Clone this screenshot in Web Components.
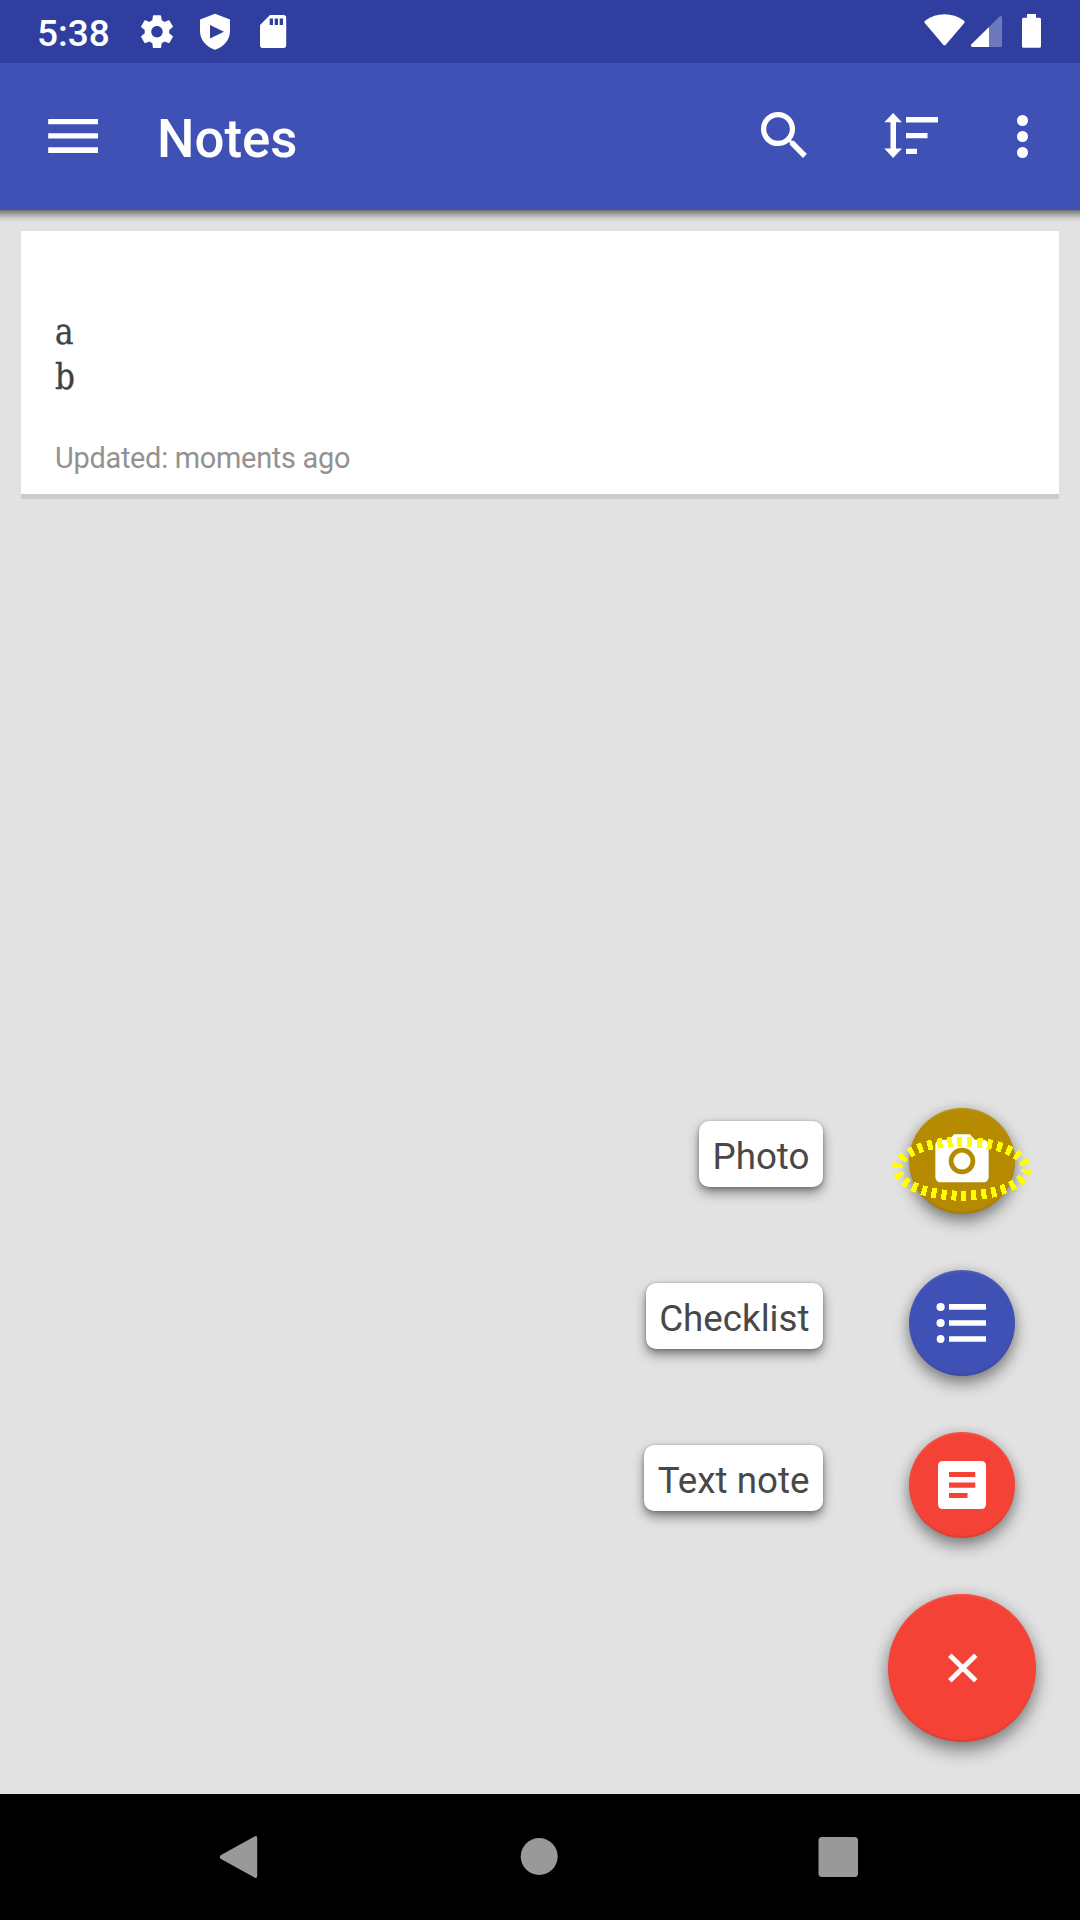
<!DOCTYPE html>
<html lang="en">
<head>
<meta charset="utf-8">
<title>Notes</title>
<style>
html,body{margin:0;padding:0}
body{width:1080px;height:1920px;overflow:hidden;font-family:Roboto,"Noto Sans",sans-serif}
</style>
</head>
<body>
<notes-app></notes-app>
<script>
const define = (name, html) => customElements.define(name, class extends HTMLElement {
  constructor() {
    super();
    const t = document.createElement('template');
    t.innerHTML = html;
    this.attachShadow({mode: 'open'}).append(t.content.cloneNode(true));
  }
});

define('status-bar', `
<style>
:host{display:flex;box-sizing:border-box;height:63px;padding:0 39px 0 37px;background:#303f9f;color:#fff;justify-content:space-between}
div{display:flex}
time{font-size:37px;font-weight:500;line-height:67px;height:63px;width:83px;margin-right:18px;white-space:nowrap}
svg{fill:#fff;height:63px;flex:none}
</style>
<div>
  <time>5:38</time>
  <svg width="58" viewBox="138 0 58 63"><path transform="translate(137.3 12) scale(1.64)" d="M19.43 12.98c.04-.32.07-.64.07-.98s-.03-.66-.07-.98l2.11-1.65c.19-.15.24-.42.12-.64l-2-3.46c-.12-.22-.39-.3-.61-.22l-2.49 1c-.52-.4-1.08-.73-1.69-.98l-.38-2.65C14.46 2.18 14.25 2 14 2h-4c-.25 0-.46.18-.49.42l-.38 2.65c-.61.25-1.17.59-1.69.98l-2.49-1c-.23-.09-.49 0-.61.22l-2 3.46c-.13.22-.07.49.12.64l2.11 1.65c-.04.32-.07.65-.07.98s.03.66.07.98l-2.11 1.65c-.19.15-.24.42-.12.64l2 3.46c.12.22.39.3.61.22l2.49-1c.52.4 1.08.73 1.69.98l.38 2.65c.03.24.24.42.49.42h4c.25 0 .46-.18.49-.42l.38-2.65c.61-.25 1.17-.59 1.69-.98l2.49 1c.23.09.49 0 .61-.22l2-3.46c.12-.22.07-.49-.12-.64l-2.11-1.65zM12 15.5c-1.93 0-3.5-1.57-3.5-3.5s1.57-3.5 3.5-3.5 3.500 1.570 3.500 3.500-1.570 3.500-3.500 3.500z"/></svg>
  <svg width="58" viewBox="196 0 58 63"><path fill-rule="evenodd" d="M215 13.700L230 19.500V31C230 40 223.500 47 215 49.700C206.500 47 200 40 200 31V19.500ZM210 25V38.600L224 31.700Z"/></svg>
  <svg width="36" viewBox="254 0 36 63"><path fill-rule="evenodd" d="M270 15H283.500Q286.200 15 286.200 17.700V45.300Q286.200 48 283.500 48H262.500Q260 48 260 45.300V25ZM269.700 18.500V25H273V18.500ZM274.700 18.500V25H278V18.500ZM279.700 18.500V25H283V18.500Z"/></svg>
</div>
<div>
  <svg width="46" viewBox="924 0 46 63"><path d="M924.800 23Q923.800 21.500 925.300 20.500Q934 14.200 944.500 14.200T963.800 20.500Q965.200 21.500 964.300 23L946 44.500Q944.500 46.200 943 44.500Z"/></svg>
  <svg width="52" viewBox="970 0 52 63"><path opacity=".3" d="M989 27L999.500 16.500Q1002 15 1002 17.500V45.500Q1002 47 1000.500 47H989Z"/><path d="M989 27V47H972Q970.300 46.500 971.200 44.500Z"/></svg>
  <svg width="19" viewBox="1022 0 19 63"><path d="M1027 14H1036V17.700H1039.500Q1041 17.700 1041 19.200V46.300Q1041 47.800 1039.500 47.800H1023.500Q1022 47.800 1022 46.300V19.200Q1022 17.700 1023.500 17.700H1027Z"/></svg>
</div>`);

define('app-toolbar', `
<style>
:host{display:flex;position:relative;box-sizing:border-box;height:147px;background:#3f51b5;color:#fff}
:host::after{content:"";position:absolute;left:0;right:0;top:147px;height:12px;background:linear-gradient(#727272 0,#a4a4a4 35%,#cfcfcf 70%,#e2e2e2 100%)}
h1{margin:0 auto 0 59px;font-size:52.8px;font-weight:500;line-height:152px;height:147px}
svg{fill:#fff;height:147px;flex:none}
.menu{margin-left:48px}
</style>
<svg class="menu" width="50" viewBox="48 63 50 147"><path d="M48.200 119H98v5.300H48.200zM48.200 133.200H98v5.200H48.200zM48.200 147.200H98v5.700H48.200z"/></svg>
<h1><slot></slot></h1>
<svg width="63" viewBox="753 63 63 147"><path transform="translate(753.100 104.100) scale(2.625)" d="M15.500 14h-.79l-.28-.27C15.410 12.590 16 11.110 16 9.500 16 5.910 13.090 3 9.500 3S3 5.910 3 9.500 5.910 16 9.500 16c1.610 0 3.090-.59 4.230-1.570l.27.28v.79l5 4.990L20.490 19l-4.990-5zm-6 0C7.010 14 5 11.990 5 9.500S7.010 5 9.500 5 14 7.010 14 9.500 11.990 14 9.500 14z"/></svg>
<svg width="200" viewBox="816 63 200 147"><path d="M893.100 113L902 122.300H896V148.500H902L893.100 158L884.300 148.500H890.500V122.300H884.300ZM906 117h32v5.500h-32zM906 133h21.500v5.300H906zM906 148.800h11v5.300h-11z"/></svg>
<svg width="64" viewBox="1016 63 64 147"><circle cx="1022.500" cy="120.500" r="5.500"/><circle cx="1022.500" cy="136.500" r="5.500"/><circle cx="1022.500" cy="152.500" r="5.500"/></svg>`);

define('note-card', `
<style>
:host{display:flex;flex-direction:column;box-sizing:border-box;height:268px;padding:79px 34px 0;background:#fff;border-bottom:5px solid #cbcbcb}
p{margin:0;color:#424242;font:34.500px/45px "Roboto Slab","DejaVu Serif Condensed","DejaVu Serif",serif;font-stretch:condensed;-webkit-text-stroke:.4px #424242}
small{margin-top:41px;font-size:28.900px;line-height:34px;letter-spacing:-.27px;color:#929292}
</style>
<p><slot></slot></p>
<small><slot name="updated"></slot></small>`);

define('action-row', `
<style>
:host{display:flex;position:relative;align-items:center;justify-content:flex-end;height:162px}
.label{box-sizing:border-box;height:66px;padding:0 13px 0 13.500px;margin:-14px 86px 0 0;border-radius:10px;background:#fff;color:#484848;font-size:36.750px;line-height:71px;box-shadow:0 0 2px #0003,0 6px 12px #0006,0 2px 5px #0003;white-space:nowrap}
.fab{box-sizing:border-box;width:106.500px;height:106.500px;padding-bottom:1px;border-radius:50%;background:var(--fab);display:flex;align-items:center;justify-content:center;box-shadow:inset 0 3px 2px -1px #ffffff14,inset 0 -3px 2px -1px #00000018,0 8px 16px #0006,0 1px 12px #0002}
</style>
<span class="label"><slot></slot></span>
<span class="fab"><slot name="icon"></slot></span>
<slot name="marker"></slot>`);

define('close-fab', `
<style>
:host{display:flex;align-items:center;justify-content:center;width:148.500px;height:148.500px;border-radius:50%;background:#f44336;box-shadow:inset 0 3px 2px -1px #ffffff10,inset 0 -3px 2px -1px #00000018,0 9px 18px #0006,0 1px 14px #0002}
</style>
<svg width="40" height="40" viewBox="0 0 40 40"><path d="M7.800 7.200L33.800 32.800M33.800 7.200L7.800 32.800" stroke="#fafafa" stroke-width="5"/></svg>`);

define('nav-bar', `
<style>
:host{display:flex;box-sizing:border-box;height:126px;padding:0 222.500px 0 219px;background:#000;align-items:center;justify-content:space-between}
svg{fill:#999;flex:none;overflow:visible}
</style>
<svg width="40" height="42" viewBox="219 1836 40 42"><path d="M254.500 1836.500Q257.200 1835 257.200 1838V1876Q257.200 1879 254.500 1877.500L221 1859Q218.500 1857 221 1855Z"/></svg>
<svg width="38" height="42" viewBox="519.200 1836 38 42"><circle cx="539.400" cy="1856.500" r="18.500"/></svg>
<svg width="40" height="42" viewBox="817.500 1836 40 42"><rect x="818" y="1837" width="39.500" height="40" rx="3.500"/></svg>`);

define('notes-app', `
<style>
:host{display:flex;flex-direction:column;position:relative;width:1080px;height:1920px;background:#e2e2e2}
main{flex:1;padding:21px}
.dial{position:absolute;right:44px;bottom:177.800px;display:flex;flex-direction:column;align-items:flex-end}
action-row{margin-right:21px}
close-fab{margin-top:27.500px}
svg{display:block}
.focus{position:absolute;right:-20px;top:53.500px}
</style>
<status-bar></status-bar>
<app-toolbar>Notes</app-toolbar>
<main><note-card>a<br>b<span slot="updated">Updated: moments ago</span></note-card></main>
<nav-bar></nav-bar>
<div class="dial">
  <action-row style="--fab:#b58900">Photo
    <svg slot="icon" width="64" height="64" viewBox="0 0 24 24" fill="#fff"><circle cx="12" cy="12" r="3.200"/><path d="M9 2L7.170 4H4c-1.100 0-2 .9-2 2v12c0 1.100.9 2 2 2h16c1.100 0 2-.9 2-2V6c0-1.100-.9-2-2-2h-3.170L15 2H9zm3 15c-2.760 0-5-2.240-5-5s2.240-5 5-5 5 2.240 5 5-2.240 5-5 5z"/></svg>
    <svg slot="marker" class="focus" width="146" height="70" viewBox="889 1134 146 70" shape-rendering="crispEdges"><ellipse cx="961.600" cy="1168.700" rx="64.500" ry="27" fill="none" stroke="#ff0" stroke-width="10" stroke-dasharray="5 5"/></svg>
  </action-row>
  <action-row style="--fab:#3f51b5">Checklist
    <svg slot="icon" width="52" height="44" viewBox="936 1301 52 44" fill="#fff"><circle cx="940.600" cy="1307" r="4.100"/><circle cx="940.600" cy="1323" r="4.100"/><circle cx="940.600" cy="1339" r="3.900"/><path d="M949 1304h37v5.700h-37zM949 1320.300h37v5.500h-37zM949 1336.300h37v5.500h-37z"/></svg>
  </action-row>
  <action-row style="--fab:#f44336">Text note
    <svg slot="icon" width="48" height="48" viewBox="938 1461 48 48"><path fill="#fff" fill-rule="evenodd" d="M943 1461H981Q986 1461 986 1466V1504Q986 1509 981 1509H943Q938 1509 938 1504V1466Q938 1461 943 1461ZM949 1472V1477H975.300V1472ZM949 1482.500V1487.700H975.300V1482.500ZM949 1493V1498H967.500V1493Z"/></svg>
  </action-row>
  <close-fab></close-fab>
</div>`);
</script>
</body>
</html>
